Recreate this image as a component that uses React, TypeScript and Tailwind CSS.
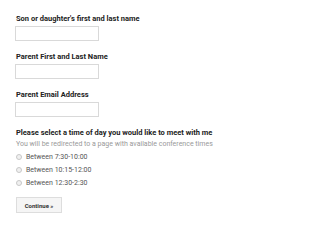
export default function App() {
  const times = ["Between 7:30-10:00", "Between 10:15-12:00", "Between 12:30-2:30"];

  return (
    <div className="min-h-screen bg-white font-['Roboto',sans-serif] text-[#222]">
      <form className="flex flex-col pl-[15px] pt-[14px]">
        <label className="pl-px text-[7.5px] font-bold leading-[10px]">Son or daughter's first and last name</label>
        <input className="mt-[2px] h-[15px] w-[84px] border border-[#d9d9d9] bg-white" />

        <label className="mt-[11px] pl-px text-[7.5px] font-bold leading-[10px]">Parent First and Last Name</label>
        <input className="mt-[2px] h-[15px] w-[84px] border border-[#d9d9d9] bg-white" />

        <label className="mt-[11px] pl-px text-[7.5px] font-bold leading-[10px]">Parent Email Address</label>
        <input className="mt-[2px] h-[15px] w-[84px] border border-[#d9d9d9] bg-white" />

        <div className="mt-[11px] pl-px text-[7.5px] font-bold leading-[10px]">
          Please select a time of day you would like to meet with me
        </div>
        <div className="mt-px pl-px text-[7px] leading-[10px] text-[#999]">
          You will be redirected to a page with available conference times
        </div>

        <div className="mt-[3px] flex flex-col gap-[3px] pl-px">
          {times.map((t) => (
            <label key={t} className="flex h-[10px] items-center gap-[4px] text-[7px] text-[#555]">
              <span className="h-[6px] w-[6px] rounded-full border border-[#c8c8c8] bg-[#f0f0f0]" />
              {t}
            </label>
          ))}
        </div>

        <button
          type="button"
          className="mt-[9px] ml-px h-[16px] w-[46px] border border-[#ddd] bg-[#f5f5f5] text-[6px] font-bold text-[#333]"
        >
          Continue »
        </button>
      </form>
    </div>
  );
}
